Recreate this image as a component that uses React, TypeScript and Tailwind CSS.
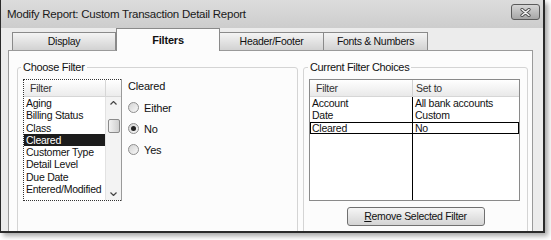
import React from "react";

const filterItems = [
  "Aging",
  "Billing Status",
  "Class",
  "Cleared",
  "Customer Type",
  "Detail Level",
  "Due Date",
  "Entered/Modified",
];

const choices = [
  { f: "Account", v: "All bank accounts" },
  { f: "Date", v: "Custom" },
  { f: "Cleared", v: "No", sel: true },
];

function Radio({ label, checked }: { label: string; checked?: boolean }) {
  return (
    <div className="h-[21px] flex items-center">
      <span className="w-[11px] h-[11px] rounded-full border border-[#8e8e8e] bg-gradient-to-br from-[#d4d4d4] to-[#f8f8f8] flex items-center justify-center">
        {checked && <span className="w-[5px] h-[5px] rounded-full bg-[#222]" />}
      </span>
      <span className="ml-[5px] text-[11px] tracking-[-0.2px] leading-[14px] text-[#111]">{label}</span>
    </div>
  );
}

export default function App() {
  return (
    <div className="w-[551px] h-[240px] bg-white font-['Liberation_Sans',Arial,sans-serif] text-[#111]">
      <div className="w-[545px] h-[233px] flex flex-col border-l border-b-2 border-r-2 border-[#2a2a2a] bg-[#ececec] shadow-[3px_3px_5px_rgba(0,0,0,0.35)] overflow-hidden">
        {/* Title bar */}
        <div className="h-[28px] shrink-0 flex items-start justify-between pl-[6px] pr-[3px] bg-gradient-to-b from-[#dcdcdc] to-[#cdcdcd]">
          <span className="mt-[7px] text-[11.5px] tracking-[-0.25px] leading-[14px] text-[#1a1a1a]">
            Modify Report: Custom Transaction Detail Report
          </span>
          <div className="mt-[4px] w-[29px] h-[16px] rounded-[3px] border border-[#5a5a5a] bg-gradient-to-b from-[#d6d6d6] to-[#a6a6a6] flex items-center justify-center">
            <svg width="11" height="9" viewBox="0 0 11 9">
              <path d="M2 1.5 L9 7.5 M9 1.5 L2 7.5" stroke="#4a4a4a" strokeWidth="3.2" strokeLinecap="round" />
              <path d="M2 1.5 L9 7.5 M9 1.5 L2 7.5" stroke="#f4f4f4" strokeWidth="1.6" strokeLinecap="round" />
            </svg>
          </div>
        </div>

        {/* Tabs */}
        <div className="h-[22px] shrink-0 flex items-end pl-[11px]">
          <div className="w-[104px] h-[18px] border border-b-0 border-[#8a8a8a] bg-gradient-to-b from-[#f4f4f4] to-[#d2d2d2] flex items-center justify-center text-[10.5px] tracking-[-0.3px]">
            Display
          </div>
          <div className="relative z-10 -mb-px w-[104px] h-[23px] border border-b-0 border-[#8a8a8a] bg-[#fcfcfc] flex items-center justify-center text-[11px] tracking-[-0.2px] font-bold">
            Filters
          </div>
          <div className="w-[104px] h-[18px] border border-b-0 border-l-0 border-[#8a8a8a] bg-gradient-to-b from-[#f4f4f4] to-[#d2d2d2] flex items-center justify-center text-[10.5px] tracking-[-0.3px]">
            Header/Footer
          </div>
          <div className="w-[104px] h-[18px] border border-b-0 border-l-0 border-[#8a8a8a] bg-gradient-to-b from-[#f4f4f4] to-[#d2d2d2] flex items-center justify-center text-[10.5px] tracking-[-0.3px]">
            Fonts &amp; Numbers
          </div>
        </div>

        {/* Panel */}
        <div className="ml-[7px] w-[525px] flex-1 border-t border-x border-[#9a9a9a] bg-[#fcfcfc] pt-[9px] pl-[8px] flex gap-[5px] text-[10.5px] tracking-[-0.25px]">
          {/* Choose Filter */}
          <fieldset className="w-[281px] h-[200px] border border-[#d4d4d4] rounded-[3px] pl-[5px] flex">
            <legend className="-ml-[2px] px-[2px] text-[11px] tracking-[-0.3px] leading-[14px]">Choose Filter</legend>
            <div className="mt-[5px] w-[99px] h-[122px] border-r border-[#9a9a9a] bg-white">
              <div className="h-full border-l border-y border-dotted border-[#333] flex flex-col">
                <div className="h-[17px] shrink-0 flex border-b border-[#d6d6d6] bg-gradient-to-b from-[#ffffff] to-[#ececec]">
                  <div className="flex-1 pl-[6px] leading-[17px] text-[#333]">Filter</div>
                  <div className="w-[16px] border-l border-[#d6d6d6]" />
                </div>
                <div className="flex-1 flex">
                  <div className="flex-1">
                    {filterItems.map((it) => (
                      <div
                        key={it}
                        className={`h-[12.3px] pl-[2px] leading-[12.3px] whitespace-nowrap ${
                          it === "Cleared" ? "bg-[#1c1c1c] text-white" : ""
                        }`}
                      >
                        {it}
                      </div>
                    ))}
                  </div>
                  <div className="w-[16px] bg-[#f3f3f3] border-l border-[#e2e2e2] flex flex-col items-center">
                    <svg width="7" height="4" viewBox="0 0 7 4" className="mt-[4px]">
                      <path d="M0.5 3.5 L3.5 0.5 L6.5 3.5" fill="none" stroke="#444" strokeWidth="1.2" />
                    </svg>
                    <div className="mt-[14px] w-[12px] h-[14px] border border-[#8a8a8a] rounded-[2px] bg-gradient-to-r from-[#f2f2f2] to-[#cfcfcf]" />
                    <div className="flex-1" />
                    <svg width="7" height="4" viewBox="0 0 7 4" className="mb-[4px]">
                      <path d="M0.5 0.5 L3.5 3.5 L6.5 0.5" fill="none" stroke="#444" strokeWidth="1.2" />
                    </svg>
                  </div>
                </div>
              </div>
            </div>
            <div className="ml-[6px] mt-[5px] flex flex-col">
              <div className="h-[14px] text-[11px] tracking-[-0.2px] leading-[14px]">Cleared</div>
              <div className="mt-[4px] flex flex-col">
                <Radio label="Either" />
                <Radio label="No" checked />
                <Radio label="Yes" />
              </div>
            </div>
          </fieldset>

          {/* Current Filter Choices */}
          <fieldset className="w-[225px] h-[200px] border border-[#d4d4d4] rounded-[3px] pl-[5px] flex flex-col">
            <legend className="-ml-[1px] px-[2px] text-[11px] tracking-[-0.35px] leading-[14px]">Current Filter Choices</legend>
            <div className="mt-[5px] w-[211px] h-[122px] border border-[#8a8a8a] bg-white flex flex-col">
              <div className="h-[17px] shrink-0 flex border-b border-[#d6d6d6] bg-gradient-to-b from-[#ffffff] to-[#e9e9e9]">
                <div className="w-[103px] pl-[6px] border-r border-[#d0d0d0] leading-[17px] text-[#333]">Filter</div>
                <div className="flex-1 pl-[3px] leading-[17px] text-[#333]">Set to</div>
              </div>
              {choices.map((c) => (
                <div
                  key={c.f}
                  className={`h-[12.3px] flex leading-[12.3px] ${c.sel ? "outline outline-1 outline-black -outline-offset-1" : ""}`}
                >
                  <div className="w-[103px] pl-[2px] border-r border-black">{c.f}</div>
                  <div className="flex-1 pl-[2px] whitespace-nowrap">{c.v}</div>
                </div>
              ))}
              <div className="flex-1 flex">
                <div className="w-[103px] border-r border-black" />
              </div>
            </div>
            <button className="mt-[6px] self-center -ml-[5px] w-[138px] h-[19px] rounded-[3px] border border-[#707070] bg-gradient-to-b from-[#f6f6f6] to-[#d4d4d4] text-[10.5px] tracking-[-0.3px] leading-[17px] text-[#111]">
              <span className="underline">R</span>emove Selected Filter
            </button>
          </fieldset>
        </div>
      </div>
    </div>
  );
}
